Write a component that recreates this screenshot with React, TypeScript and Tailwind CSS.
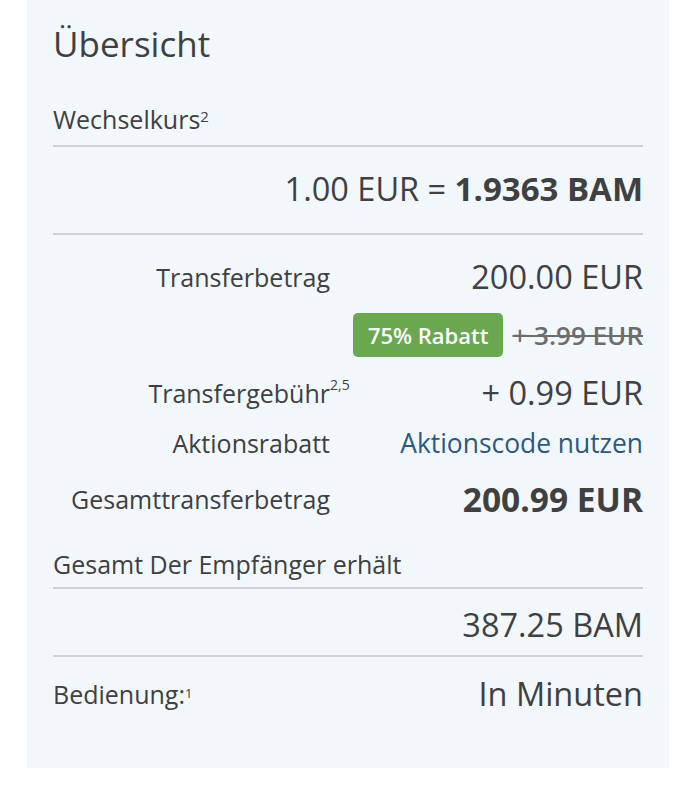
import React from "react";

const Line = ({ className = "" }: { className?: string }) => (
  <div className={`h-[2px] bg-[#cfd1d3] ${className}`} />
);

export default function App() {
  return (
    <div className="w-[696px] h-[800px] bg-white text-[#404040]" style={{ fontFamily: '"Open Sans", "Noto Sans", sans-serif' }}>
      <div className="ml-[27px] w-[642px] bg-[#f2f7fb] px-[26px] pt-[24px] pb-[54px]">
        <h1 className="text-[35px] leading-[40px] font-normal">Übersicht</h1>

        <div className="mt-[39px] text-[25px] leading-[32px]">
          Wechselkurs<sup className="text-[15px]">2</sup>
        </div>
        <Line className="mt-[10px]" />

        <div className="mt-[22px] text-right text-[32.5px] leading-[40px]">
          1.00 EUR = <span className="font-bold text-[33px]">1.9363 BAM</span>
        </div>
        <Line className="mt-[24px]" />

        <div className="mt-[22px] grid grid-cols-[277px_1fr] items-center h-[40px]">
          <div className="text-right text-[25px] leading-[32px]">Transferbetrag</div>
          <div className="text-right text-[32.5px] leading-[40px]">200.00 EUR</div>
        </div>

        <div className="mt-[16px] flex justify-end items-center gap-[9px] h-[44px]">
          <span className="h-[44px] flex items-center px-[15px] rounded-[5px] bg-[#69a84f] text-white font-semibold text-[22px]">
            75% Rabatt
          </span>
          <span className="text-[26px] leading-[34px] font-semibold text-[#6d6d6d] line-through decoration-2">+ 3.99 EUR</span>
        </div>

        <div className="mt-[16px] grid grid-cols-[277px_1fr] items-center h-[40px]">
          <div className="text-right text-[25px] leading-[32px]">
            <span className="relative">
              Transfergebühr
              <span className="absolute left-full top-[2px] text-[14px] leading-none">2,5</span>
            </span>
          </div>
          <div className="text-right text-[32.5px] leading-[40px]">+ 0.99 EUR</div>
        </div>

        <div className="mt-[10px] grid grid-cols-[277px_1fr] items-center h-[40px]">
          <div className="text-right text-[25px] leading-[32px]">Aktionsrabatt</div>
          <div className="text-right text-[26.4px] leading-[34px] text-[#2a5a80]">Aktionscode nutzen</div>
        </div>

        <div className="mt-[16px] grid grid-cols-[277px_1fr] items-center h-[40px]">
          <div className="text-right text-[25px] leading-[32px]">Gesamttransferbetrag</div>
          <div className="text-right text-[33.5px] leading-[40px] font-bold">200.99 EUR</div>
        </div>

        <div className="mt-[29px] text-[25px] leading-[32px]">Gesamt Der Empfänger erhält</div>
        <Line className="mt-[7px]" />

        <div className="mt-[16px] text-right text-[32.5px] leading-[40px]">387.25 BAM</div>
        <Line className="mt-[10px]" />

        <div className="mt-[17px] flex justify-between items-center h-[40px]">
          <div className="text-[25px] leading-[32px]">
            Bedienung:<sup className="text-[13px]">1</sup>
          </div>
          <div className="text-[32.5px] leading-[40px]">In Minuten</div>
        </div>
      </div>
    </div>
  );
}
